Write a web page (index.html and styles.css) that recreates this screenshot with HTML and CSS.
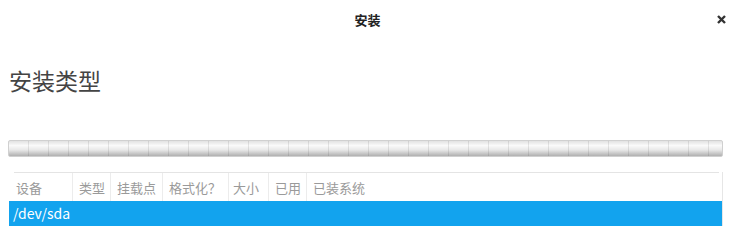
FILE: index.html
```html
<!DOCTYPE html>
<html lang="zh-CN">
<head>
  <meta charset="UTF-8">
  <meta name="viewport" content="width=device-width, initial-scale=1.0">
  <title>安装</title>
  <link rel="stylesheet" href="styles.css">
</head>
<body>
  <header class="titlebar">
    <span></span>
    <h1 class="title">安装</h1>
    <button class="close" aria-label="关闭">
      <svg width="9" height="9" viewBox="0 0 9 9"><path d="M1 1L8 8M8 1L1 8" stroke="#333" stroke-width="2.4"/></svg>
    </button>
  </header>
  <main class="content">
    <h2 class="page-title">安装类型</h2>
    <div class="disk-bar"></div>
    <div class="partition-table">
      <div class="table-head">
        <div class="col col-device">设备</div>
        <div class="col col-type">类型</div>
        <div class="col col-mount">挂载点</div>
        <div class="col col-format">格式化？</div>
        <div class="col col-size">大小</div>
        <div class="col col-used">已用</div>
        <div class="col col-system">已装系统</div>
      </div>
      <div class="table-row selected">/dev/sda</div>
    </div>
  </main>
</body>
</html>
```

FILE: styles.css
```css
/* Global Styles */
body {
  margin: 0;
  padding: 0;
  background: #fff;
  font-family: "Noto Sans CJK SC", "Noto Sans", sans-serif;
  color: #333;
  overflow: hidden;
}

/* Title bar */
.titlebar {
  display: grid;
  grid-template-columns: 1fr auto 1fr;
  align-items: center;
  height: 38px;
}

.title {
  margin: 0;
  font-size: 13px;
  font-weight: bold;
  color: #222;
}

.close {
  justify-self: end;
  margin-right: 9px;
  border: none;
  background: none;
  padding: 0;
  display: flex;
}

/* Main content */
.content {
  padding: 0 12px 0 8px;
}

.page-title {
  margin: 26px 0 0 1px;
  font-size: 23px;
  font-weight: normal;
  line-height: 32px;
  color: #444;
}

.disk-bar {
  margin-top: 44px;
  height: 15px;
  border: 1px solid #d0d0d0;
  border-radius: 2px;
  background:
    repeating-linear-gradient(to right, transparent 0, transparent 19px, rgba(0, 0, 0, 0.09) 19px, rgba(0, 0, 0, 0.09) 20px),
    linear-gradient(to bottom, #e2e2e2 0%, #fafafa 30%, #e8e8e8 60%, #b0b0b0 100%);
}

.partition-table {
  margin-top: 15px;
  margin-left: 1px;
  border-right: 1px solid #e6e6e6;
}

.table-head {
  display: flex;
  margin-left: 5px;
  margin-right: 3px;
  border-top: 1px solid #e4e4e4;
  height: 28px;
  align-items: stretch;
}

.col {
  box-sizing: border-box;
  flex-shrink: 0;
  display: flex;
  align-items: center;
  padding: 0 6px;
  font-size: 13px;
  color: #9a9a9a;
  white-space: nowrap;
  border-right: 1px solid #ececec;
}

.col-device { width: 59px; padding-left: 2px; }
.col-type { width: 38px; }
.col-mount { width: 52px; }
.col-format { width: 66px; }
.col-size { width: 40px; padding-left: 4px; }
.col-used { width: 38px; }
.col-system { border-right: none; }

.table-row {
  height: 25px;
  line-height: 25px;
  padding-left: 4px;
  font-size: 14px;
}

.table-row.selected {
  background: #12a3ee;
  color: #fff;
}
```
